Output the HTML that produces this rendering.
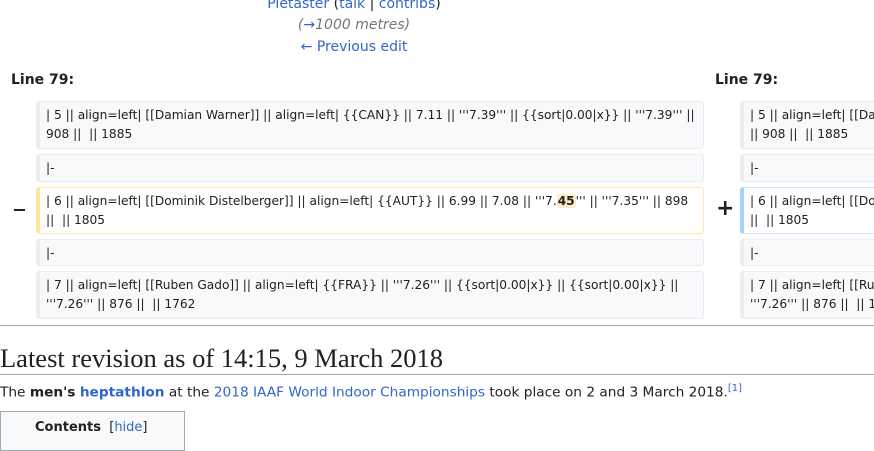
<!DOCTYPE html>
<html><head><meta charset="utf-8"><style>
body{margin:0;width:874px;height:439px;overflow:hidden;background:#fff;font-family:"DejaVu Sans","Liberation Sans",sans-serif;color:#202122;position:relative}
.a{position:absolute;white-space:nowrap}
a,.l{color:#36c;text-decoration:none}
.c{text-align:center;width:300px;left:204px;font-size:14px}
.box{position:absolute;box-sizing:border-box;font-size:12.2px;line-height:19px;padding:4px 0 0 6px;white-space:nowrap;overflow:hidden;border-radius:3px}
.ctx{background:#f8f9fa;border:1px solid #eaecf0;border-left:4px solid #eaecf0}
.del{background:#fff;border:1px solid #fee7a6;border-left:4px solid #ffe49c}
.add{background:#fff;border:1px solid #cde8ff;border-left:4px solid #a3d3ff}
.h{font-weight:bold;font-size:14px}
</style></head><body>
<div class="a c" style="top:-4px"><span class="l">Pietaster</span> (<span class="l">talk</span> | <span class="l">contribs</span>)</div>
<div class="a c" style="top:17px;color:#72777d;font-style:italic">(<span class="l">→</span>1000 metres)</div>
<div class="a c" style="top:39px"><span class="l">← Previous edit</span></div>
<div class="a h" style="left:11px;top:72px">Line 79:</div>
<div class="a h" style="left:715px;top:72px">Line 79:</div>

<div class="box ctx" style="left:36px;top:101px;width:668px;height:48px">| 5 || align=left| [[Damian Warner]] || align=left| {{CAN}} || 7.11 || '''7.39''' || {{sort|0.00|x}} || '''7.39''' ||<br>908 ||&nbsp; || 1885</div>
<div class="box ctx" style="left:36px;top:154px;width:668px;height:28px">|-</div>
<div class="box del" style="left:36px;top:187px;width:668px;height:47px">| 6 || align=left| [[Dominik Distelberger]] || align=left| {{AUT}} || 6.99 || 7.08 || '''7.<b style="background:#feeec8;border-radius:3px;padding:0 1px">45</b>''' || '''7.35''' || 898<br>||&nbsp; || 1805</div>
<div class="box ctx" style="left:36px;top:239px;width:668px;height:27px">|-</div>
<div class="box ctx" style="left:36px;top:271px;width:668px;height:48px">| 7 || align=left| [[Ruben Gado]] || align=left| {{FRA}} || '''7.26''' || {{sort|0.00|x}} || {{sort|0.00|x}} ||<br>'''7.26''' || 876 ||&nbsp; || 1762</div>

<div class="box ctx" style="left:740px;top:101px;width:140px;height:48px">| 5 || align=left| [[Damian Warner]]<br>|| 908 ||&nbsp; || 1885</div>
<div class="box ctx" style="left:740px;top:154px;width:140px;height:28px">|-</div>
<div class="box add" style="left:740px;top:187px;width:140px;height:47px">| 6 || align=left| [[Dominik<br>||&nbsp; || 1805</div>
<div class="box ctx" style="left:740px;top:239px;width:140px;height:27px">|-</div>
<div class="box ctx" style="left:740px;top:271px;width:140px;height:48px">| 7 || align=left| [[Ruben<br>'''7.26''' || 876 ||&nbsp; || 1762</div>

<div class="a" style="left:14px;top:209px;width:11px;height:2px;background:#202122"></div>
<div class="a" style="left:716px;top:196px;font-size:22px;font-weight:bold;line-height:26px">+</div>

<div class="a" style="left:0;top:325px;width:874px;height:1px;background:#a2a9b1"></div>
<div class="a" style="left:0;top:343px;font-family:'Liberation Serif',serif;font-size:26.5px;line-height:30px">Latest revision as of 14:15, 9 March 2018</div>
<div class="a" style="left:0;top:374px;width:874px;height:1px;background:#a2a9b1"></div>
<div class="a" style="left:0;top:383px;font-size:13.7px">The <b>men's</b> <b class="l">heptathlon</b> at the <span class="l">2018 IAAF World Indoor Championships</span> took place on 2 and 3 March 2018.<sup class="l" style="font-size:10px">[1]</sup></div>
<div class="a" style="left:0;top:411px;width:185px;height:40px;box-sizing:border-box;border:1px solid #a2a9b1;background:#f8f9fa"></div>
<div class="a" style="left:35px;top:420px;font-size:13px"><b>Contents</b>&nbsp; [<span class="l">hide</span>]</div>
</body></html>
